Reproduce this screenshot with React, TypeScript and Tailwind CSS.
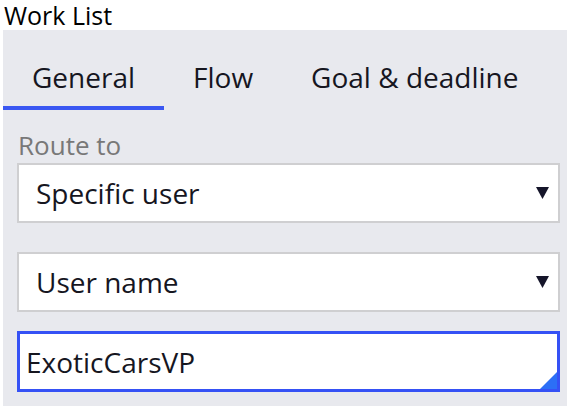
import { useState } from "react";

const TABS = ["General", "Flow", "Goal & deadline"];

function Caret() {
  return (
    <svg width="13" height="12" viewBox="0 0 13 12" className="shrink-0">
      <path d="M0 0 H13 L6.5 12 Z" fill="#15152a" />
    </svg>
  );
}

function SelectBox({ value }: { value: string }) {
  return (
    <div className="flex h-[60px] items-center justify-between border-2 border-[#cfcfd1] bg-white pl-[17px] pr-[9px]">
      <span>{value}</span>
      <Caret />
    </div>
  );
}

export default function App() {
  const [tab, setTab] = useState(0);

  return (
    <div className="h-[406px] w-[569px] overflow-hidden bg-white text-[#16161f] [font-family:'Open_Sans',sans-serif]">
      <div className="h-[30px] pl-[4px] text-[25px] leading-[30px] text-black">Work List</div>

      <div className="ml-[3px] mr-[2px] bg-[#e8e9ee] pb-[14px]">
        <div className="flex">
          {TABS.map((name, i) => (
            <button
              key={name}
              onClick={() => setTab(i)}
              className={
                "h-[80px] px-[29px] pt-[28px] pb-[10px] text-[28px] leading-[38px] border-b-4 " +
                (tab === i ? "border-[#3a57f2]" : "border-transparent")
              }
            >
              {name}
            </button>
          ))}
        </div>

        <div className="pl-[14px] pr-[7px] text-[28px]">
          <div className="mt-[19px] mb-[2px] pl-[1px] text-[26px] leading-[32px] text-[#787878]">Route to</div>
          <SelectBox value="Specific user" />
          <div className="mt-[29px]">
            <SelectBox value="User name" />
          </div>
          <div className="relative mt-[19px] flex h-[61px] items-center border-[3px] border-[#3551f5] bg-white pl-[6px]">
            <span>ExoticCarsVP</span>
            <svg width="17" height="17" viewBox="0 0 17 17" className="absolute bottom-0 right-0">
              <path d="M17 0 V17 H0 Z" fill="#2c6ff6" />
            </svg>
          </div>
        </div>
      </div>
    </div>
  );
}
